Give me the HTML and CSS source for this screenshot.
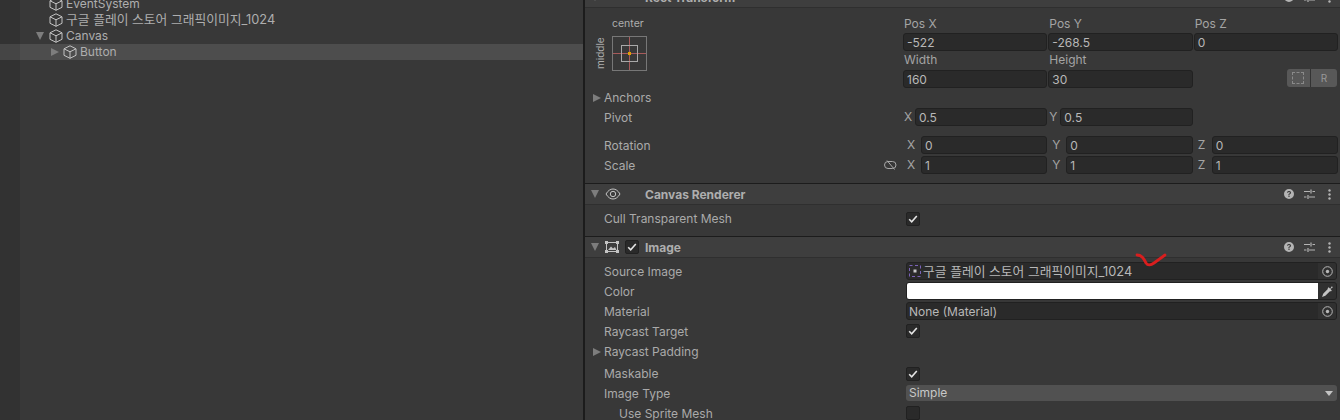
FILE: index.html
```html
<!DOCTYPE html>
<html lang="en">
<head>
    <meta charset="UTF-8">
    <meta name="viewport" content="width=device-width, initial-scale=1.0">
    <title>Unity Editor</title>
    <link rel="stylesheet" href="styles.css">
</head>
<body>
    <svg class="defs" width="0" height="0">
        <symbol id="cube" viewBox="0 0 14 14">
            <path d="M7 .8 13 3.8V10.3L7 13.3 1 10.3V3.8ZM1 3.8 7 6.8 13 3.8M7 6.8V13.3" fill="none" stroke="currentColor" stroke-linejoin="round"/>
        </symbol>
        <symbol id="help" viewBox="0 0 10 10">
            <path fill-rule="evenodd" d="M5 0a5 5 0 1 0 0 10A5 5 0 0 0 5 0ZM4.4 6.2V5.5C4.4 4.6 5.9 4.5 5.9 3.7 5.9 3.2 5.5 3 5 3 4.500 3 4.100 3.300 4 3.800L2.900 3.500C3.100 2.500 4 2 5 2 6.200 2 7.100 2.600 7.100 3.700 7.100 4.900 5.500 5 5.500 5.800V6.200ZM4.400 6.800H5.600V8H4.400Z" fill="currentColor"/>
        </symbol>
        <symbol id="sliders" viewBox="0 0 11 11">
            <path d="M0 2.500H6M8.500 2.500H11M0 8H2.500M5 8H11M7 .5V4.500M4 6V10" fill="none" stroke="currentColor" stroke-width="1.200"/>
        </symbol>
        <symbol id="dots" viewBox="0 0 3 11">
            <circle cx="1.500" cy="1.500" r="1.200" fill="currentColor"/>
            <circle cx="1.500" cy="5.500" r="1.200" fill="currentColor"/>
            <circle cx="1.500" cy="9.500" r="1.200" fill="currentColor"/>
        </symbol>
        <symbol id="target" viewBox="0 0 11 11">
            <circle cx="5.500" cy="5.500" r="4.800" fill="none" stroke="currentColor"/>
            <circle cx="5.500" cy="5.500" r="1.700" fill="currentColor"/>
        </symbol>
        <symbol id="check" viewBox="0 0 10 10">
            <path d="M1.200 5.300 3.700 7.800 8.800 2" fill="none" stroke="currentColor" stroke-width="1.600"/>
        </symbol>
    </svg>

    <div class="hierarchy">
        <div class="tree-row depth-1"><svg class="cube"><use href="#cube"/></svg>EventSystem</div>
        <div class="tree-row depth-1"><svg class="cube"><use href="#cube"/></svg><span class="ko">구글 플레이 스토어 그래픽이미지_1024</span></div>
        <div class="tree-row depth-1"><span class="fold fold-open fold-canvas"></span><svg class="cube"><use href="#cube"/></svg>Canvas</div>
        <div class="tree-row depth-2 selected"><span class="fold fold-button"></span><svg class="cube"><use href="#cube"/></svg>Button</div>
        <div class="gutter"></div>
    </div>
    <div class="splitter"></div>

    <div class="inspector">
        <section class="panel">
            <div class="panel-header">
                <span class="fold fold-open"></span>
                <span class="panel-icon"></span>
                <span class="panel-title">Rect Transform</span>
                <span class="panel-tools">
                    <svg class="tool-help"><use href="#help"/></svg>
                    <svg class="tool-sliders"><use href="#sliders"/></svg>
                    <svg class="tool-dots"><use href="#dots"/></svg>
                </span>
            </div>
            <div class="rect-body">
                <div class="rect-top">
                    <div class="anchor-box">
                        <span class="anchor-center">center</span>
                        <div class="anchor-line">
                            <span class="anchor-middle">middle</span>
                            <svg class="anchor-preset" width="35" height="35" viewBox="0 0 35 35">
                                <rect x=".5" y=".5" width="34" height="34" fill="none" stroke="#777"/>
                                <path d="M17.500 1V34M1 17.500H34" stroke="#a85a5a"/>
                                <rect x="9.500" y="9.500" width="16" height="16" fill="none" stroke="#a8a8a8"/>
                                <rect x="16" y="16" width="3" height="3" fill="#e0a000"/>
                            </svg>
                        </div>
                    </div>
                    <div class="vec-grid">
                        <div class="grid-label">Pos X</div>
                        <div class="grid-label">Pos Y</div>
                        <div class="grid-label">Pos Z</div>
                        <div class="field">-522</div>
                        <div class="field">-268.5</div>
                        <div class="field">0</div>
                        <div class="grid-label label-gap">Width</div>
                        <div class="grid-label label-gap">Height</div>
                        <div></div>
                        <div class="field">160</div>
                        <div class="field">30</div>
                        <div class="reset-group">
                            <span class="reset-btn reset-blue"><span class="dashed"></span></span>
                            <span class="reset-btn reset-r">R</span>
                        </div>
                    </div>
                </div>
                <div class="prop"><span class="fold fold-prop"></span><span class="prop-label">Anchors</span></div>
                <div class="prop">
                    <span class="prop-label">Pivot</span>
                    <div class="vec-grid">
                        <div class="vec-cell"><span class="axis axis-small">X</span><div class="field">0.5</div></div>
                        <div class="vec-cell"><span class="axis axis-small">Y</span><div class="field">0.5</div></div>
                    </div>
                </div>
                <div class="prop prop-spaced">
                    <span class="prop-label">Rotation</span>
                    <div class="vec-grid">
                        <div class="vec-cell"><span class="axis">X</span><div class="field">0</div></div>
                        <div class="vec-cell"><span class="axis">Y</span><div class="field">0</div></div>
                        <div class="vec-cell"><span class="axis">Z</span><div class="field">0</div></div>
                    </div>
                </div>
                <div class="prop">
                    <span class="prop-label">Scale</span>
                    <svg class="link-off" width="13" height="10" viewBox="0 0 13 10">
                        <path d="M4 1.500H8.500A3.500 3.500 0 0 1 8.500 8.500H4A3.500 3.500 0 0 1 4 1.500ZM3 .5 10.500 9.500" fill="none" stroke="#a8a8a8"/>
                    </svg>
                    <div class="vec-grid">
                        <div class="vec-cell"><span class="axis">X</span><div class="field">1</div></div>
                        <div class="vec-cell"><span class="axis">Y</span><div class="field">1</div></div>
                        <div class="vec-cell"><span class="axis">Z</span><div class="field">1</div></div>
                    </div>
                </div>
            </div>
        </section>

        <section class="panel">
            <div class="panel-header">
                <span class="fold fold-open"></span>
                <svg class="panel-icon" width="16" height="12" viewBox="0 0 16 12">
                    <path d="M1 6C3 2.500 5.500 1 8 1S13 2.500 15 6C13 9.500 10.500 11 8 11S3 9.500 1 6Z" fill="none" stroke="#c4c4c4"/>
                    <circle cx="8" cy="6" r="2.700" fill="none" stroke="#c4c4c4"/>
                </svg>
                <span class="panel-title">Canvas Renderer</span>
                <span class="panel-tools">
                    <svg class="tool-help"><use href="#help"/></svg>
                    <svg class="tool-sliders"><use href="#sliders"/></svg>
                    <svg class="tool-dots"><use href="#dots"/></svg>
                </span>
            </div>
            <div class="canvas-body">
                <div class="prop">
                    <span class="prop-label">Cull Transparent Mesh</span>
                    <span class="checkbox check-low"><svg><use href="#check"/></svg></span>
                </div>
            </div>
        </section>

        <section class="panel">
            <div class="panel-header">
                <span class="fold fold-open"></span>
                <svg class="panel-icon image-icon" width="14" height="12" viewBox="0 0 14 12">
                    <rect x="1.500" y="1.500" width="11" height="9" fill="none" stroke="#c4c4c4"/>
                    <path d="M0 0H3V3H0ZM11 0H14V3H11ZM0 9H3V12H0ZM11 9H14V12H11Z" fill="#c4c4c4"/>
                    <path d="M3 9 6 5.500 8 7.500 10 6 11.500 9Z" fill="#c4c4c4"/>
                </svg>
                <span class="checkbox header-check"><svg><use href="#check"/></svg></span>
                <span class="panel-title title-image">Image</span>
                <span class="panel-tools">
                    <svg class="tool-help"><use href="#help"/></svg>
                    <svg class="tool-sliders"><use href="#sliders"/></svg>
                    <svg class="tool-dots"><use href="#dots"/></svg>
                </span>
            </div>
            <div class="image-body">
                <div class="prop">
                    <span class="prop-label">Source Image</span>
                    <div class="field object-field">
                        <svg class="sprite-thumb" width="12" height="12" viewBox="0 0 12 12">
                            <rect x=".5" y=".5" width="11" height="11" fill="none" stroke="#7a62b8" stroke-dasharray="3 2.500"/>
                            <rect x="4.500" y="4.500" width="3" height="3" fill="#c8c8c8"/>
                        </svg>
                        <span class="object-name ko">구글 플레이 스토어 그래픽이미지_1024</span>
                        <span class="picker"><svg><use href="#target"/></svg></span>
                    </div>
                </div>
                <div class="prop">
                    <span class="prop-label">Color</span>
                    <div class="field color-field">
                        <span class="swatch"></span>
                        <span class="picker">
                            <svg class="dropper" viewBox="0 0 12 12"><path d="M1 11 2 8 6.500 3.500 8.500 5.500 4 10ZM7 2 8.500 3.500 10 1.200 11 2 8.800 3.800 10 5.200 9 6 6 3Z" fill="#c4c4c4"/></svg>
                        </span>
                    </div>
                </div>
                <div class="prop">
                    <span class="prop-label">Material</span>
                    <div class="field object-field">
                        <span class="object-name">None (Material)</span>
                        <span class="picker"><svg><use href="#target"/></svg></span>
                    </div>
                </div>
                <div class="prop">
                    <span class="prop-label">Raycast Target</span>
                    <span class="checkbox"><svg><use href="#check"/></svg></span>
                </div>
                <div class="prop"><span class="fold fold-prop"></span><span class="prop-label">Raycast Padding</span></div>
                <div class="prop prop-maskable">
                    <span class="prop-label">Maskable</span>
                    <span class="checkbox check-low"><svg><use href="#check"/></svg></span>
                </div>
                <div class="prop">
                    <span class="prop-label">Image Type</span>
                    <div class="dropdown">Simple<span class="caret"></span></div>
                </div>
                <div class="prop">
                    <span class="prop-label label-indent">Use Sprite Mesh</span>
                    <span class="checkbox"></span>
                </div>
            </div>
        </section>
    </div>

    <svg class="scribble" width="34" height="20" viewBox="0 0 34 20">
        <path d="M2 3C7 3 9 7 11 11 13 14 16 13 19 11L30 3" fill="none" stroke="#d91e1e" stroke-width="2.800" stroke-linecap="round"/>
    </svg>
</body>
</html>
```

FILE: styles.css
```css
html, body {
    height: 100%;
}
body {
    font-family: Inter, 'Noto Sans CJK KR', sans-serif;
    font-size: 12px;
    margin: 0;
    padding: 0;
    background-color: #383838;
    color: #aeaeae;
    display: flex;
    overflow: hidden;
    position: relative;
}
.defs {
    position: absolute;
}
.ko {
    font-size: 12.8px;
}

/* hierarchy */
.hierarchy {
    width: 583px;
    height: 424px;
    margin-top: -4px;
    position: relative;
    flex: none;
}
.gutter {
    position: absolute;
    left: 0;
    top: 0;
    bottom: 0;
    width: 20px;
    background: rgba(0, 0, 0, 0.1);
}
.tree-row {
    height: 16px;
    line-height: 16px;
    display: flex;
    align-items: center;
    white-space: nowrap;
}
.depth-1 {
    padding-left: 49px;
}
.depth-2 {
    padding-left: 63px;
}
.selected {
    background-color: #4d4d4d;
}
.cube {
    width: 14px;
    height: 14px;
    margin-right: 3px;
    color: #c4c4c4;
    flex: none;
}
.fold {
    width: 0;
    height: 0;
    border-style: solid;
    border-width: 4px 0 4px 8px;
    border-color: transparent transparent transparent #7d7d7d;
    flex: none;
}
.fold-open {
    border-width: 8px 4px 0 4px;
    border-color: #7d7d7d transparent transparent transparent;
}
.fold-canvas {
    margin-left: -13px;
    margin-right: 5px;
}
.fold-button {
    margin-left: -12px;
    margin-right: 4px;
}

.splitter {
    width: 2px;
    background-color: #1c1c1c;
    flex: none;
}

/* inspector */
.inspector {
    flex: 1;
    margin-top: -13px;
    min-width: 0;
}
.panel {
    border-bottom: 1px solid #1c1c1c;
}
.panel-header {
    height: 20px;
    background-color: #3e3e3e;
    border-bottom: 1px solid #2f2f2f;
    display: flex;
    align-items: center;
    padding-left: 6px;
}
.panel-icon {
    width: 16px;
    margin-left: 6px;
    flex: none;
}
.image-icon {
    width: 14px;
    margin-left: 6px;
}
.panel-title {
    font-weight: 700;
    margin-left: 24px;
}
.title-image {
    margin-left: 6px;
}
.panel-tools {
    margin-left: auto;
    width: 56px;
    display: flex;
    align-items: center;
    color: #b4b4b4;
    flex: none;
}
.tool-help {
    width: 10px;
    height: 10px;
    margin-right: 10px;
}
.tool-sliders {
    width: 11px;
    height: 11px;
    margin-right: 13px;
}
.tool-dots {
    width: 3px;
    height: 11px;
}
.rect-body {
    padding-top: 8px;
    height: 175px;
    box-sizing: border-box;
}
.rect-top {
    display: flex;
    height: 72px;
}
.anchor-box {
    width: 318px;
    padding-left: 9px;
    box-sizing: border-box;
    flex: none;
}
.anchor-center {
    display: block;
    font-size: 10.5px;
    line-height: 15px;
    margin-left: 18px;
}
.anchor-line {
    display: flex;
    margin-top: 5px;
}
.anchor-middle {
    writing-mode: vertical-rl;
    transform: rotate(180deg);
    font-size: 10px;
    width: 12px;
    line-height: 12px;
    text-align: center;
    height: 35px;
}
.anchor-preset {
    margin-left: 6px;
}
.vec-grid {
    display: grid;
    width: 435px;
    grid-template-columns: repeat(3, 1fr);
    column-gap: 1px;
    flex: none;
}
.grid-label {
    height: 16px;
    line-height: 15px;
    padding-left: 1px;
    color: #a4a4a4;
}
.label-gap {
    margin-top: 1px;
    height: 17px;
}
.field {
    height: 18px;
    line-height: 17px;
    box-sizing: border-box;
    background-color: #2a2a2a;
    border: 1px solid #212121;
    border-radius: 3px;
    padding-left: 3px;
    color: #b8b8b8;
    min-width: 0;
    flex: 1;
    white-space: nowrap;
}
.reset-group {
    display: flex;
    justify-content: flex-end;
    padding-right: 1px;
    margin-top: -1px;
}
.reset-btn {
    height: 18px;
    background-color: #585858;
    display: flex;
    align-items: center;
    justify-content: center;
    box-sizing: border-box;
    color: #999;
    font-size: 10px;
}
.reset-blue {
    width: 24px;
    border-radius: 3px 0 0 3px;
    border-right: 1px solid #333;
}
.reset-r {
    width: 26px;
    border-radius: 0 3px 3px 0;
}
.dashed {
    width: 10px;
    height: 10px;
    border: 1px dashed #8a8a8a;
}
.prop {
    height: 20px;
    padding: 0 2px 0 19px;
    display: flex;
    align-items: flex-start;
}
.prop-label {
    flex: 1;
    line-height: 20px;
    color: #aaaaaa;
    white-space: nowrap;
}
.prop-spaced {
    margin-top: 8px;
}
.fold-prop {
    margin: 6px 3px 0 -11px;
}
.vec-cell {
    display: flex;
}
.axis {
    width: 18px;
    padding-left: 4px;
    box-sizing: border-box;
    line-height: 18px;
    color: #a4a4a4;
    flex: none;
}
.axis-small {
    width: 12px;
    padding-left: 1px;
}
.link-off {
    margin: 4px 6px 0 0;
    flex: none;
}
.canvas-body {
    height: 31px;
    padding-top: 4px;
    box-sizing: border-box;
}
.checkbox {
    width: 14px;
    height: 14px;
    margin: 2px 418px 0 0;
    box-sizing: border-box;
    background-color: #2a2a2a;
    border: 1px solid #212121;
    border-radius: 2px;
    color: #e4e4e4;
    display: flex;
    align-items: center;
    justify-content: center;
    flex: none;
}
.check-low {
    margin-top: 3px;
}
.checkbox svg {
    width: 10px;
    height: 10px;
}
.header-check {
    margin: 0 0 0 6px;
}
.image-body {
    padding-top: 4px;
}
.object-field, .color-field {
    width: 431px;
    margin-right: 1px;
    flex: none;
    display: flex;
    align-items: center;
    padding-left: 2px;
    overflow: hidden;
}
.color-field {
    padding-left: 0;
}
.sprite-thumb {
    margin-right: 2px;
    flex: none;
}
.object-name {
    flex: 1;
}
.picker {
    width: 18px;
    height: 16px;
    background-color: #303030;
    display: flex;
    align-items: center;
    justify-content: center;
    color: #b8b8b8;
    flex: none;
}
.picker svg {
    width: 11px;
    height: 11px;
}
.picker .dropper {
    width: 13px;
    height: 13px;
}
.swatch {
    flex: 1;
    height: 16px;
    background-color: #fff;
}
.prop-maskable {
    margin-top: 2px;
}
.dropdown {
    width: 431px;
    height: 16px;
    line-height: 16px;
    margin: 1px 1px 0 0;
    padding-left: 3px;
    box-sizing: border-box;
    background-color: #515151;
    border-radius: 3px;
    color: #c8c8c8;
    display: flex;
    justify-content: space-between;
    align-items: center;
    flex: none;
}
.caret {
    width: 0;
    height: 0;
    margin-right: 4px;
    border-style: solid;
    border-width: 5px 4px 0 4px;
    border-color: #c4c4c4 transparent transparent transparent;
}
.label-indent {
    padding-left: 15px;
}

/* red mark drawn over the screenshot */
.scribble {
    position: absolute;
    left: 1135px;
    top: 252px;
}
```
